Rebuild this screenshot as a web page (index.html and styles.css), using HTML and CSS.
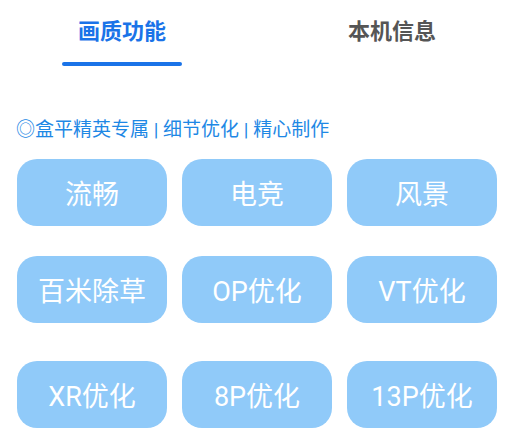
FILE: index.html
```html
<!DOCTYPE html>
<html>
<head>
<meta charset="utf-8">
<link rel="stylesheet" href="styles.css">
</head>
<body>
<div class="page">
  <div class="tabs">
    <div class="tab active">画质功能<span class="bar"></span></div>
    <div class="tab other">本机信息</div>
  </div>
  <div class="subtitle">◎盒平精英专属 | 细节优化 | 精心制作</div>
  <div class="grid row1">
    <div class="btn">流畅</div>
    <div class="btn">电竞</div>
    <div class="btn">风景</div>
  </div>
  <div class="grid row2">
    <div class="btn">百米除草</div>
    <div class="btn">OP优化</div>
    <div class="btn">VT优化</div>
  </div>
  <div class="grid row3">
    <div class="btn">XR优化</div>
    <div class="btn">8P优化</div>
    <div class="btn">13P优化</div>
  </div>
</div>
</body>
</html>
```

FILE: styles.css
```css
html, body {
  margin: 0;
  padding: 0;
  background: #ffffff;
}
body {
  font-family: Roboto, "Noto Sans CJK SC", sans-serif;
  width: 512px;
  height: 438px;
  overflow: hidden;
}
.page {
  display: flex;
  flex-direction: column;
}
.tabs {
  display: flex;
  height: 67px;
  padding-left: 62px;
}
.tab {
  position: relative;
  width: 120px;
  text-align: center;
  font-size: 22px;
  font-weight: bold;
  line-height: 22px;
  padding-top: 21px;
}
.tab.active {
  color: #1a73e8;
}
.tab.other {
  margin-left: 150px;
  color: #555555;
}
.bar {
  position: absolute;
  left: 0;
  top: 62px;
  width: 120px;
  height: 4px;
  border-radius: 2px;
  background: #1a73e8;
}
.subtitle {
  margin-top: 51px;
  padding-left: 16px;
  font-size: 19px;
  line-height: 24px;
  height: 24px;
  color: #1e88e5;
  white-space: nowrap;
}
.grid {
  display: grid;
  grid-template-columns: repeat(3, 150px);
  column-gap: 15px;
  padding-left: 17px;
}
.row1 { margin-top: 17px; }
.row2 { margin-top: 30px; }
.row3 { margin-top: 38px; }
.btn {
  height: 67px;
  border-radius: 20px;
  background: #90caf9;
  color: #ffffff;
  font-size: 27px;
  display: flex;
  align-items: center;
  justify-content: center;
}
```
